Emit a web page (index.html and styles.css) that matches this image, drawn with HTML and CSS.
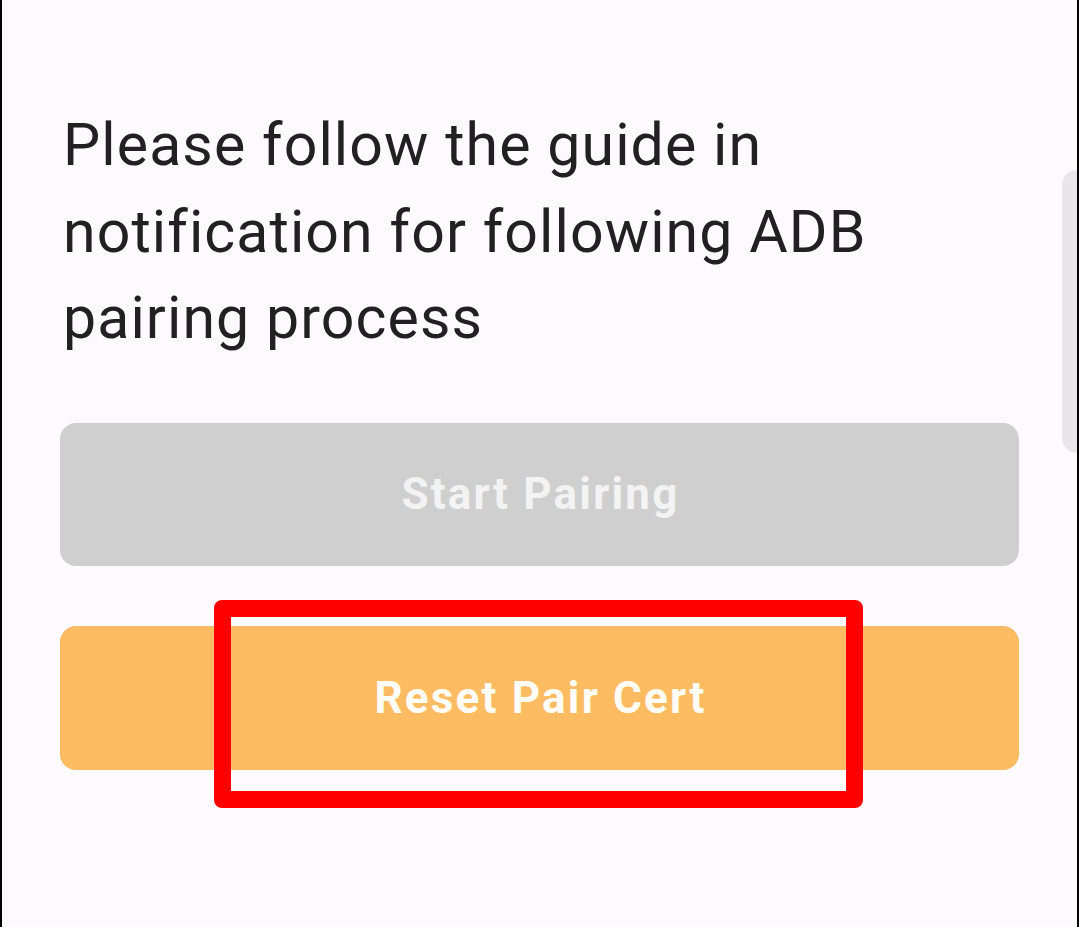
FILE: index.html
```html
<!DOCTYPE html>
<html lang="en">
<head>
  <meta charset="UTF-8">
  <meta name="viewport" content="width=device-width, initial-scale=1.0">
  <title>ADB Pairing</title>
  <link rel="stylesheet" href="styles.css">
</head>
<body>
  <div class="screen">
    <p class="guide">Please follow the guide in notification for following ADB pairing process</p>

    <div class="actions">
      <button class="btn btn-start" disabled>Start Pairing</button>
      <button class="btn btn-reset">Reset Pair Cert</button>
    </div>

    <!-- side handle peeking in from the right edge -->
    <div class="side-handle"></div>
    <!-- annotation box around the reset button -->
    <div class="highlight"></div>
  </div>
</body>
</html>
```

FILE: styles.css
```css
html, body {
  margin: 0;
  padding: 0;
}

body {
  font-family: Roboto, "Liberation Sans", Arial, sans-serif;
  background-color: #fdfafd;
}

.screen {
  position: relative;
  box-sizing: border-box;
  width: 1079px;
  height: 927px;
  border-left: 2px solid #000;
  border-right: 2px solid #000;
  padding: 102px 58px 0 58px;
  overflow: hidden;
}

.guide {
  margin: 0 0 0 3px;
  font-size: 59px;
  line-height: 86.5px;
  letter-spacing: 1.1px;
  color: #212121;
  width: 900px;
}

.actions {
  display: flex;
  flex-direction: column;
  gap: 61px;
  margin-top: 61px;
}

.btn {
  height: 143px;
  width: 100%;
  border: none;
  border-radius: 16px;
  font-family: Roboto, "Liberation Sans", Arial, sans-serif;
  font-weight: bold;
  font-size: 44px;
  letter-spacing: 2.2px;
  padding: 0 0 0 2px;
}

.btn-start {
  background-color: #cfcfcf;
  color: #f3f3f3;
}

.btn-reset {
  background-color: #fdbb62;
  color: #fffdf6;
  box-shadow: 0 -1px 0 #efb878;
}

.side-handle {
  position: absolute;
  top: 170px;
  right: 0;
  width: 15px;
  height: 283px;
  background-color: #e8e6e8;
  border-radius: 16px 0 0 16px;
}

.highlight {
  position: absolute;
  left: 212px;
  top: 600px;
  width: 649px;
  height: 208px;
  box-sizing: border-box;
  border: 17px solid #ff0000;
  border-radius: 8px;
}
```
